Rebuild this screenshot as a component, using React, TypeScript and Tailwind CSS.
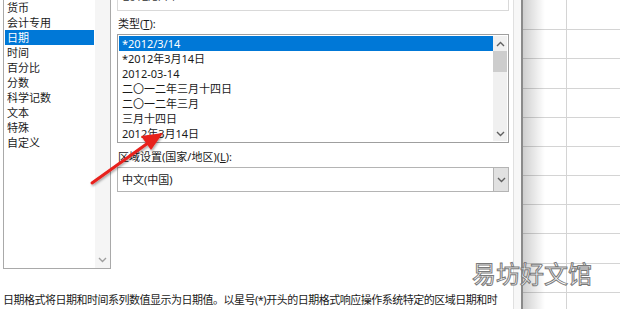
import React from "react";

const categories = ["货币", "会计专用", "日期", "时间", "百分比", "分数", "科学记数", "文本", "特殊", "自定义"];
const types = ["*2012/3/14", "*2012年3月14日", "2012-03-14", "二〇一二年三月十四日", "二〇一二年三月", "三月十四日", "2012年3月14日"];
const rowHeights = ["h-[30px]", "h-[29px]", "h-[30px]", "h-[29px]", "h-[29px]", "h-[29px]", "h-[29px]", "h-[29px]", "h-[30px]", "h-[29px]", "h-[29px]"];

const font = "font-['Noto_Sans','Noto_Sans_CJK_SC',sans-serif]";

function Chevron({ up }: { up?: boolean }) {
  return (
    <svg width="9" height="6" viewBox="0 0 9 6" className="block">
      <path
        d={up ? "M1 5 L4.5 1.5 L8 5" : "M1 1 L4.5 4.5 L8 1"}
        fill="none"
        stroke="#606060"
        strokeWidth="1.4"
      />
    </svg>
  );
}

export default function App() {
  return (
    <div className={`relative flex h-[309px] w-[620px] overflow-hidden bg-white text-[#1a1a1a] ${font}`}>
      {/* dialog */}
      <div className="flex w-[513px] flex-col overflow-hidden bg-white">
        <div className="flex h-[287px]">
          {/* category list */}
          <div className="ml-[3px] mt-[-1px] flex h-[270px] w-[108px] border border-[#a9a9a9]">
            <div className="flex flex-1 flex-col text-[11px] leading-[15px]">
              {categories.map((c) => (
                <div
                  key={c}
                  className={`mx-[1px] h-[15px] pl-[2px] ${c === "日期" ? "bg-[#0078d7] text-white" : ""}`}
                >
                  {c}
                </div>
              ))}
            </div>
            <div className="flex w-[15px] flex-col justify-end bg-[#f0f0f0] pb-[5px] pl-[3px] opacity-60">
              <Chevron />
            </div>
          </div>

          {/* right panel */}
          <div className="ml-[6px] flex w-[392px] flex-col">
            <div className="mt-[-12px] h-[23px] border border-[#d9d9d9] pl-[5px] text-[11px] leading-[16px] text-[#555]">
              2012/3/14
            </div>
            <div className="mt-[5px] h-[15px] pl-[1px] text-[11px] leading-[15px]">
              类型(<span className="underline">T</span>):
            </div>
            <div className="mt-[3px] flex h-[109px] border border-[#9f9f9f] p-[1px]">
              <div className="flex flex-1 flex-col text-[11px] leading-[15px]">
                {types.map((t, i) => (
                  <div key={t} className={`h-[15px] pl-[3px] ${i === 0 ? "bg-[#0078d7] text-white" : ""}`}>
                    {t}
                  </div>
                ))}
              </div>
              <div className="flex w-[14px] flex-col bg-[#f0f0f0]">
                <div className="flex h-[15px] items-center justify-center">
                  <Chevron up />
                </div>
                <div className="h-[21px] bg-[#cdcdcd]" />
                <div className="flex-1" />
                <div className="flex h-[14px] items-center justify-center">
                  <Chevron />
                </div>
              </div>
            </div>
            <div className="mt-[6px] h-[15px] pl-[1px] text-[11px] leading-[15px]">
              区域设置(国家/地区)(<span className="underline">L</span>):
            </div>
            <div className="mt-[3px] flex h-[25px] border border-[#b4b4b4]">
              <div className="flex-1 pl-[4px] text-[11px] leading-[23px]">中文(中国)</div>
              <div className="flex w-[15px] items-center justify-center border-l border-[#b4b4b4] bg-[#e1e1e1]">
                <Chevron />
              </div>
            </div>
          </div>
        </div>
        <div className="whitespace-nowrap pl-[3px] pt-[6px] text-[11px] leading-[14px] tracking-[-0.5px]">
          日期格式将日期和时间系列数值显示为日期值。以星号(*)开头的日期格式响应操作系统特定的区域日期和时
        </div>
      </div>

      {/* dialog edge */}
      <div className="w-[8px] border-l border-[#e0e0e0] bg-[#f7f7f7]" />
      <div className="w-[2px] bg-[#8a8a8a]" />

      {/* sheet */}
      <div className="relative flex-1 bg-white">
        {rowHeights.map((h, i) => (
          <div key={i} className={`flex ${h} border-b border-[#d4d4d4]`}>
            <div className="w-[44px] border-r border-[#d4d4d4]" />
            <div className="flex-1" />
          </div>
        ))}
        <div className="absolute inset-y-0 left-0 w-[22px] bg-gradient-to-r from-[#00000030] to-transparent" />
      </div>

      {/* watermark */}
      <div className="absolute left-[472px] top-[260px] text-[24px] leading-[28px] text-white [-webkit-text-stroke:1px_#7a7a7a]">
        易坊好文馆
      </div>

      {/* red arrow */}
      <svg className="absolute left-0 top-0" width="620" height="309">
        <defs>
          <filter id="sh" x="-20%" y="-20%" width="140%" height="140%">
            <feDropShadow dx="1" dy="1.5" stdDeviation="1" floodColor="#000" floodOpacity="0.35" />
          </filter>
        </defs>
        <g filter="url(#sh)">
          <line x1="92" y1="183" x2="148" y2="143" stroke="#e8201c" strokeWidth="3" strokeLinecap="round" />
          <polygon points="163,133 141,136 151,150" fill="#e8201c" />
        </g>
      </svg>
    </div>
  );
}
